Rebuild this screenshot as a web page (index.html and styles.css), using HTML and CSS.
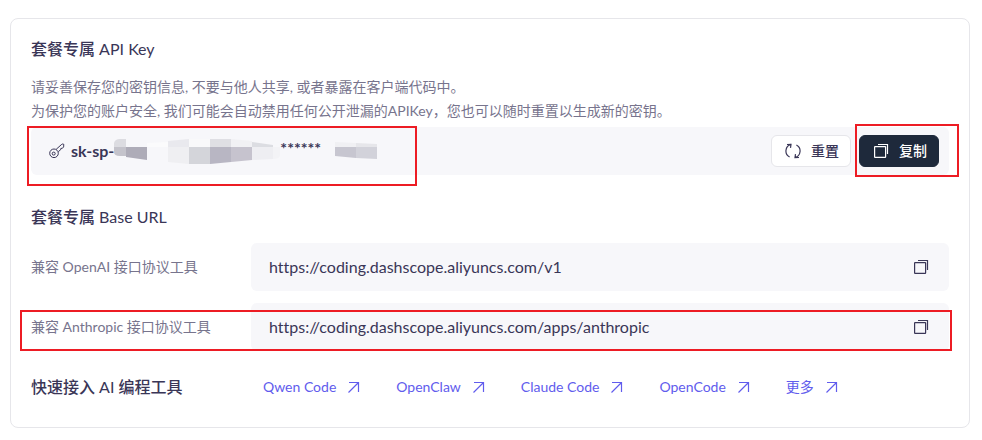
FILE: index.html
```
<!DOCTYPE html>
<html lang="zh-CN">
<head>
  <meta charset="UTF-8" />
  <meta name="viewport" content="width=device-width, initial-scale=1.0"/>
  <title>API Key</title>
  <link rel="stylesheet" href="styles.css">
</head>
<body>

  <!-- Shared icons -->
  <svg class="sprite" aria-hidden="true">
    <symbol id="icon-copy" viewBox="0 0 16 16">
      <rect x="1.6" y="3.6" width="11" height="10.8" rx="0.5"/>
      <path d="M5 1.5h9.5V11"/>
    </symbol>
    <symbol id="icon-arrow" viewBox="0 0 16 16">
      <path d="M3 3.5h9.5V13M12.5 3.5L2.5 13.5"/>
    </symbol>
  </svg>

  <main class="card">
    <h2 class="title">套餐专属<span class="latin"> API Key</span></h2>
    <p class="desc">
      请妥善保存您的密钥信息, 不要与他人共享, 或者暴露在客户端代码中。<br>
      为保护您的账户安全, 我们可能会自动禁用任何公开泄漏的APIKey，您也可以随时重置以生成新的密钥。
    </p>

    <div class="key-bar">
      <svg class="icon key-icon" viewBox="0 0 16 16" aria-hidden="true">
        <path d="M7.2 6.3L12.2 1.8 13.2 1l1.6.3-.2 2.6-1.2 1.4-1.5.1-.3 1.4-2.3 1.8"/>
        <circle cx="5" cy="10.3" r="4.3"/>
        <circle cx="4.7" cy="10.6" r="1.5"/>
      </svg>
      <span class="key-text">sk-sp-</span>
      <svg class="mosaic" width="166" height="28" viewBox="0 0 166 28" aria-hidden="true">
        <path d="M0 6Q1 2 6 2h6v8H0z" fill="#dcdce1"/>
        <path d="M0 10h12v9H6Q0 19 0 15z" fill="#c4c3cb"/>
        <path d="M12 10h21v13L12 20z" fill="#aeacb8"/>
        <path d="M33 6l21-1v5H33z" fill="#fbfbfc"/>
        <path d="M54 4l21-2v8H54z" fill="#e9e9ee"/>
        <path d="M54 10h21v17l-21-2z" fill="#efeff2"/>
        <path d="M75 2h21v8H75z" fill="#f9f9fa"/>
        <path d="M75 10h21v17H75z" fill="#d4d5da"/>
        <path d="M96 2h21v8H96z" fill="#dfdfe4"/>
        <path d="M96 10h21v15l-21 2z" fill="#b8b6c3"/>
        <path d="M117 2l21 2v6h-21z" fill="#f1f1f4"/>
        <path d="M117 10h21v13l-21 2z" fill="#c6c3ce"/>
        <path d="M138 5l21 3v2h-21z" fill="#dcdde2"/>
        <path d="M138 10h21v12l-21 1z" fill="#eeeef2"/>
        <path d="M159 10h7v8q0 4-7 4z" fill="#f3f3f6"/>
      </svg>
      <span class="key-text key-stars">******</span>
      <svg class="mosaic" width="42" height="28" viewBox="0 0 42 28" aria-hidden="true">
        <path d="M0 5l21 1v4H0z" fill="#f0f0f3"/>
        <path d="M0 10h21v11L0 19z" fill="#c7c6d0"/>
        <path d="M21 6l21 1v3H21z" fill="#e6e6ea"/>
        <path d="M21 10h21v12l-21-1z" fill="#d2d2da"/>
      </svg>

      <div class="actions">
        <button class="btn" type="button">
          <svg class="icon" viewBox="0 0 16 16" aria-hidden="true">
            <path d="M6 1.4A6.8 6.8 0 0 0 4.6 14M2 1.5l4-.2-.5 3.6M10 14.6A6.8 6.8 0 0 0 11.4 2M14 14.5l-4 .2.5-3.6"/>
          </svg>
          重置
        </button>
        <button class="btn btn-dark" type="button">
          <svg class="icon" aria-hidden="true"><use href="#icon-copy"/></svg>
          复制
        </button>
      </div>
      <span class="mark mark-key"></span>
      <span class="mark mark-copy"></span>
    </div>

    <h2 class="title title-url">套餐专属<span class="latin"> Base URL</span></h2>
    <div class="row">
      <span class="label">兼容 OpenAI 接口协议工具</span>
      <div class="url">
        <span>https://coding.dashscope.aliyuncs.com/v1</span>
        <button class="icon-btn" type="button" aria-label="复制">
          <svg class="icon" aria-hidden="true"><use href="#icon-copy"/></svg>
        </button>
      </div>
    </div>
    <div class="row">
      <span class="label">兼容 Anthropic 接口协议工具</span>
      <div class="url">
        <span>https://coding.dashscope.aliyuncs.com/apps/anthropic</span>
        <button class="icon-btn" type="button" aria-label="复制">
          <svg class="icon" aria-hidden="true"><use href="#icon-copy"/></svg>
        </button>
      </div>
      <span class="mark mark-row"></span>
    </div>

    <div class="tools">
      <h2 class="title">快速接入<span class="latin"> AI </span>编程工具</h2>
      <nav class="links">
        <a href="#">Qwen Code <svg class="icon" aria-hidden="true"><use href="#icon-arrow"/></svg></a>
        <a href="#">OpenClaw <svg class="icon" aria-hidden="true"><use href="#icon-arrow"/></svg></a>
        <a href="#">Claude Code <svg class="icon" aria-hidden="true"><use href="#icon-arrow"/></svg></a>
        <a href="#">OpenCode <svg class="icon" aria-hidden="true"><use href="#icon-arrow"/></svg></a>
        <a href="#">更多 <svg class="icon" aria-hidden="true"><use href="#icon-arrow"/></svg></a>
      </nav>
    </div>
  </main>

</body>
</html>
```
FILE: styles.css
```
* {
  box-sizing: border-box;
}

body {
  margin: 0;
  padding: 18px 12px 12px 10px;
  font-family: Lato, "Noto Sans CJK SC", sans-serif;
  font-size: 14px;
  font-variant-ligatures: none;
  line-height: 24px;
  color: #3a3657;
  background: #fff;
}

.sprite {
  position: absolute;
  width: 0;
  height: 0;
}

.card {
  border: 1px solid #e6e6ea;
  border-radius: 8px;
  padding: 18px 20px 28px;
}

.title {
  margin: 0;
  font-size: 16px;
  font-weight: 500;
}

.latin {
  font-weight: 400;
}

.desc {
  margin: 14px 0 4px;
  color: #77748d;
}

.icon {
  width: 16px;
  height: 16px;
  flex: none;
  fill: none;
  stroke: currentColor;
  stroke-width: 1.2;
}

/* API key */
.key-bar {
  position: relative;
  display: flex;
  align-items: center;
  height: 48px;
  padding: 0 10px 0 18px;
  border-radius: 6px;
  background: #f7f7fa;
}

.key-text {
  font-size: 16px;
  font-weight: 700;
}

.key-icon {
  margin-right: 6px;
  stroke-width: 1;
}

.mosaic {
  flex: none;
}

.key-stars {
  margin-right: 14px;
  padding-bottom: 6px;
}

.actions {
  display: flex;
  gap: 8px;
  margin-left: auto;
}

.btn {
  display: flex;
  align-items: center;
  justify-content: center;
  gap: 10px;
  width: 80px;
  height: 32px;
  padding: 0 0 0 2px;
  border: 1px solid #e6e6ea;
  border-radius: 6px;
  background: #fff;
  color: #3a3657;
  font: inherit;
  font-weight: 500;
  cursor: pointer;
}

.btn-dark {
  border-color: #1e293b;
  background: #1e293b;
  color: #fff;
}

/* Base URL */
.title-url {
  margin: 30px 0 14px;
}

.row {
  position: relative;
  display: flex;
  align-items: center;
  margin-bottom: 12px;
}

.label {
  width: 220px;
  flex: none;
  color: #77748d;
}

.url {
  display: flex;
  flex: 1;
  align-items: center;
  justify-content: space-between;
  height: 48px;
  padding: 0 20px 0 18px;
  border-radius: 6px;
  background: #f7f7fa;
  font-size: 16px;
}

.icon-btn {
  display: flex;
  padding: 0;
  border: none;
  background: none;
  color: inherit;
  cursor: pointer;
}

/* Tools */
.tools {
  display: flex;
  margin-top: 24px;
}

.tools .title {
  width: 232px;
  flex: none;
}

.links {
  display: flex;
  gap: 34px;
}

.links a {
  display: flex;
  align-items: center;
  gap: 10px;
  color: #615ced;
  text-decoration: none;
}

/* Red highlight frames */
.mark {
  position: absolute;
  border: 2px solid #ed1c24;
  pointer-events: none;
}

.mark-key {
  top: -1px;
  left: -4px;
  width: 390px;
  height: 60px;
}

.mark-copy {
  top: -3px;
  right: -10px;
  width: 104px;
  height: 53px;
}

.mark-row {
  top: 7px;
  left: -11px;
  right: -3px;
  height: 41px;
}
```
